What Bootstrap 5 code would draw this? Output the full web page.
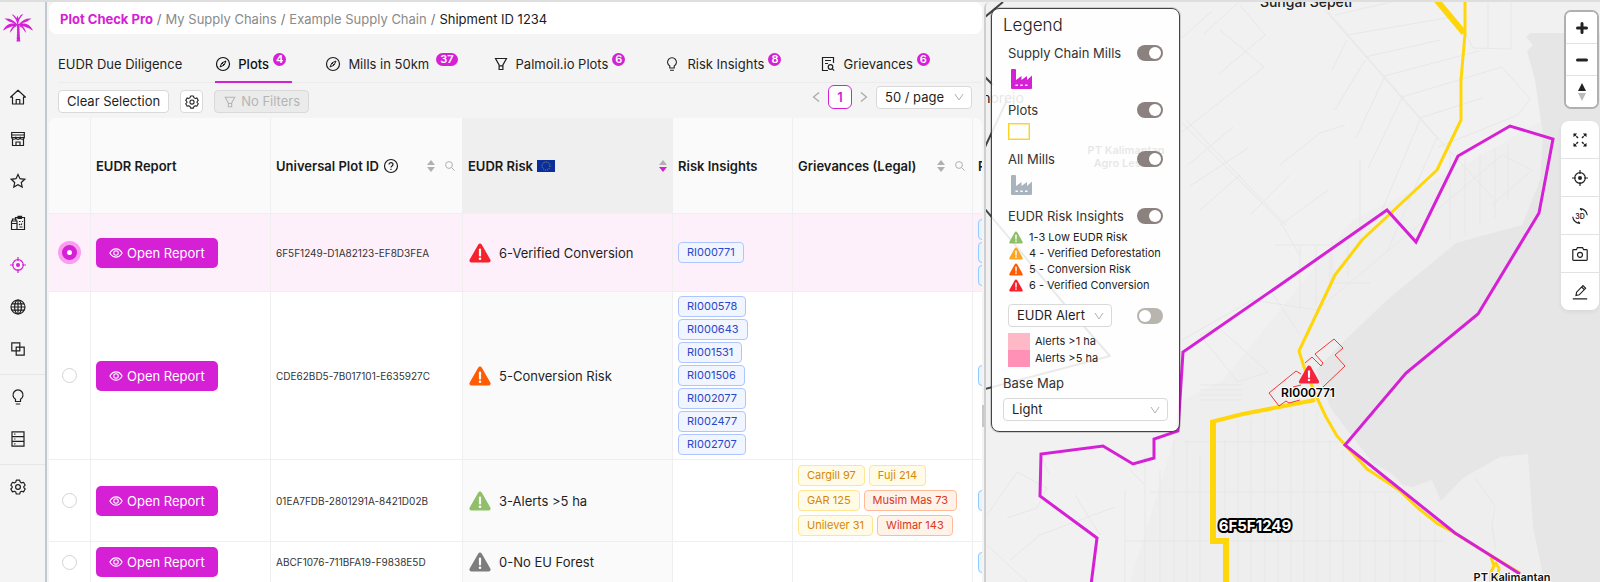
<!DOCTYPE html>
<html lang="en">
<head>
<meta charset="utf-8">
<meta name="viewport" content="width=device-width, initial-scale=1">
<title>Plot Check Pro</title>
<link href="https://cdn.jsdelivr.net/npm/bootstrap@5.3.0/dist/css/bootstrap.min.css" rel="stylesheet">
<style>
:root{--brand:#d520d5;--line:#efefef;--ink:#1f1f1f}
body{font-family:Inter,"Liberation Sans",sans-serif;font-size:13px;line-height:20px;color:var(--ink);background:#f4f4f4}
a{text-decoration:none;color:inherit}
.ico{width:16px;height:16px;flex:none;fill:none;stroke:currentColor;stroke-width:1.2;display:block}
.app{border-top:2px solid #dedede}
.rail{width:47px;flex:none;border-right:2px solid #c3c8d0;margin-right:1px}
.rail a{height:42px;padding-right:9px}
.rail a.on{color:var(--brand)}
.rail .brand{height:74px;padding-top:10px;color:var(--brand)}
.rail hr{margin:4px 0 1px;border-color:#bbb}
.work{flex:0 0 58.5%;min-width:0;padding-left:1px;padding-right:2px;position:relative}
.crumbs{background:#fff;border-radius:8px;height:32px;padding:1px 0 0 11px;margin:0;--bs-breadcrumb-divider-color:#777;--bs-breadcrumb-item-padding-x:4px}
.crumbs li{color:#8a8a8a}
.crumbs .first{color:var(--brand);font-weight:700}
.crumbs .active{color:#1b1b1b}
.tabbar{margin:12px 0 0 9px;height:37px;gap:33px;border-bottom:1px solid #ececec}
.tabbar .nav-link{padding:0;height:37px;color:var(--ink);gap:7px;border-bottom:2px solid transparent;display:flex;align-items:center}
.tabbar .nav-link.active{border-color:var(--brand);font-weight:500;color:#111}
.tabbar .badge{background:var(--brand);font-size:11px;line-height:13px;padding:0 3px;height:13px;font-weight:600;margin:0 6px 8px -3px}
.tabbar .badge.wide{margin:0 2px 8px 0;padding:0 4px}
.tools{padding:2px 10px 0 9px;height:35px}
.tools .acts{gap:11px;padding-top:5px}
.ctl{height:23px;border:1px solid #d9d9d9;border-radius:4px;background:#fff;color:var(--ink);padding:0 8px;font-size:13px;line-height:21px}
.ctl.sq{width:23px;padding:0}
.ctl.ghost{background:#ebebeb;color:#b5b5b5}
.ctl .ico{width:14px;height:14px}
.pager{gap:8px;color:#a8a8a8}
.pager .here{width:24px;height:24px;border:1px solid var(--brand);border-radius:6px;color:var(--brand);background:#fff;font-weight:600;line-height:22px;text-align:center}
.pager .ico{width:8px;height:12px}
.pick{height:23px;border:1px solid #d9d9d9;border-radius:4px;padding:0 26px 0 8px;font-size:13px;line-height:21px;color:var(--ink);appearance:none;background:#fff url("data:image/svg+xml,%3Csvg xmlns='http://www.w3.org/2000/svg' width='10' height='10' fill='none' stroke='%23b0b0b0'%3E%3Cpath d='M1 2l4 6 4-6'/%3E%3C/svg%3E") no-repeat right 7px center}
.pick.base{margin-top:5px}
.sheet{border-radius:8px 8px 0 0;overflow:hidden;background:#fff;flex:1}
.sheet table{width:1043px;table-layout:fixed;border-collapse:separate;border-spacing:0}
.sheet th,.sheet td{border-right:1px solid var(--line);border-bottom:1px solid var(--line);padding:0 5px;vertical-align:middle}
.sheet th{background:#fafafa;height:96px;font-weight:600;color:#1a1a1a}
.sheet .ranked{background:#fafafa;padding-left:6px}
.sheet th.ranked{background:#efefef;padding-left:5px}
.sheet tr.sel td{background:#fdf0fb}
.h1r{height:78px}.h2r{height:168px}.h3r{height:82px}.h4r{height:41px}
.sort,.find{color:#b0b0b0}
.sort{width:8px;height:12px;flex:none}
.find{width:10px;height:10px;margin:0 2px 0 10px}
.uid{font-size:10px;color:#333}
.open{background:var(--brand);color:#fff;border:0;border-radius:5px;height:30px;padding:0 13px;gap:4px}
.open .ico{width:14px;height:14px}
.dot{appearance:none;width:15px;height:15px;border:1px solid #d4d4d4;border-radius:50%;background:#fff;margin:0;display:block}
.dot:checked{border:5px solid var(--brand);box-shadow:0 0 0 4px #fb9df0}
.tag{font-size:11px;line-height:19px;height:21px;border:1px solid #adc6ff;background:#f0f5ff;color:#2b47c9;border-radius:4px;padding:0 8px;white-space:nowrap}
.stack{gap:2px}
.tag.y{background:#fffbe6;border-color:#ffe58f;color:#d48806}
.tag.r{background:#fff2e8;border-color:#ffbb96;color:#d9381a}
.tag.b{background:#e6f4ff;border-color:#91caff;width:60px}
.grip{position:absolute;right:0;top:403px;width:2px;height:22px;background:#c8c8c8}
.map{background:#f1f1f1;border-left:2px solid #cfcfcf;border-radius:6px 0 0 0}
.legendbox{position:absolute;left:5px;top:6px;width:189px;height:424px;background:rgba(255,255,255,.89);border:1px solid #444;border-radius:8px;padding:6px 11px;box-shadow:0 0 0 1px rgba(0,0,0,.15)}
.legendbox h2{font-size:17px;line-height:20px;font-weight:300;margin:0 0 9px;color:#222}
.legendbox .body{padding:0 5px}
.legendbox label{line-height:18px;color:#333}
.sw{appearance:none;width:26px;height:16px;border-radius:8px;background:#b8b4ae;margin:0;position:relative;flex:none}
.sw::after{content:"";position:absolute;width:12px;height:12px;border-radius:50%;background:#fff;top:2px;left:2px}
.sw:checked{background:#8b817e}
.sw:checked::after{left:12px}
.mill{width:22px;height:22px;display:block;margin:6px 0 11px 2px}
.plotbox{width:22px;height:17px;border:1px solid #ffd21f;margin:4px 0 10px;box-shadow:inset 0 0 0 1px #ffec9b}
.keys{list-style:none;margin:4px 0 11px;padding:0 0 0 1px;font-size:11px;line-height:16px}
.keys li{gap:6px;height:16px}
.keys svg{width:14px;height:13px}
.swatch{width:22px;height:17px}
.ramp{font-size:11px;line-height:17px;margin:6px 0 6px}
.ramp>div{gap:5px}
.zoomer{position:absolute;right:1px;top:8px;border:2px solid #b0b0b0;border-radius:7px;overflow:hidden;width:35px;background:#fff}
.zoomer button,.kit button{border:0;background:#fff;display:flex;align-items:center;justify-content:center;width:100%;color:#222}
.zoomer button{height:31px}
.zoomer button+button,.kit button+button{border-top:1px solid #e2e2e2}
.zoomer button+button{height:32px}
.kit{position:absolute;right:1px;top:119px;width:38px;border-radius:8px;overflow:hidden}
.kit button{height:37px}
.kit button+button{height:38px}
</style>
</head>
<body>
<svg width="0" height="0" class="position-absolute">
<defs>
<symbol id="warn" viewBox="0 0 22 20"><path d="M9.300 1.400a2 2 0 0 1 3.400 0l8.600 15.200a1.900 1.900 0 0 1-1.700 2.900H2.400a1.900 1.900 0 0 1-1.700-2.900z" fill="currentColor"/><path d="M11 6.500v6" stroke="#fff" stroke-width="2.200" stroke-linecap="round"/><circle cx="11" cy="15.700" r="1.300" fill="#fff"/></symbol>
<symbol id="eye" viewBox="0 0 16 16"><path d="M1 8c3.500-6.300 10.500-6.300 14 0-3.500 6.300-10.500 6.300-14 0z"/><circle cx="8" cy="8" r="2.600"/></symbol>
<symbol id="compass" viewBox="0 0 16 16"><circle cx="8" cy="8" r="6.500"/><path d="M11 5L6.900 6.900 5 11 9.100 9.100zM7 7l2 2" stroke-width="1"/></symbol>
<symbol id="funnel" viewBox="0 0 16 16"><path d="M2.500 2.500h11L9.900 9v4.500H6.100V9zM6.100 9.800h3.800"/></symbol>
<symbol id="bulb" viewBox="0 0 16 16"><path d="M5.500 12.500v-2.200a5 5 0 1 1 5 0v2.200zM5.800 15h4.400"/></symbol>
<symbol id="gear" viewBox="0 0 16 16"><path d="M6.300 1.200h3.400l.5 1.900 1.400.8 1.900-.6 1.700 2.900-1.400 1.400v1l1.400 1.400-1.700 2.900-1.900-.6-1.400.8-.5 1.900H6.300l-.5-1.900-1.400-.8-1.900.6L.8 10l1.400-1.400v-1L.8 6.200l1.700-2.900 1.900.6 1.400-.8z" stroke-linejoin="round"/><circle cx="8" cy="8" r="2.400"/></symbol>
<symbol id="aim" viewBox="0 0 16 16"><circle cx="8" cy="8" r="5.300"/><circle cx="8" cy="8" r="2" fill="currentColor" stroke="none"/><path d="M8 0v4M8 12v4M0 8h4M12 8h4"/></symbol>
<symbol id="sort" viewBox="0 0 8 12"><path d="M4 0l4 5H0z" fill="currentColor"/><path d="M4 12L0 7h8z" fill="var(--dn,currentColor)"/></symbol>
<symbol id="find" viewBox="0 0 10 10"><circle cx="4" cy="4" r="3.400" fill="none" stroke="currentColor"/><path d="M6.500 6.500L9.700 9.700" stroke="currentColor"/></symbol>
<symbol id="mill" viewBox="0 0 22 22"><path d="M2 1h3q1 0 1 1v10l5.500-4v4l5.500-4 0 4 5-4.500V20q0 1-1 1H2q-1 0-1-1V2q0-1 1-1z" fill="currentColor"/><path d="M5.500 17.300h2.400M10.300 17.300h2.400M15.100 17.300h2.400" stroke="#fff" stroke-width="1.400"/></symbol>
</defs>
</svg>
<div class="app d-flex vh-100 overflow-hidden">
<nav class="rail d-flex flex-column" aria-label="Main">
<a href="#" class="brand d-flex justify-content-center align-items-start" aria-label="Home page"><svg width="32" height="32" viewBox="0 0 32 32" fill="currentColor"><path d="M15.200 12c-.4-3-2-6.500-5.700-9.500 1 .1 1.500.5 2 .3 0 .7 1 1 1.500 1.300.2.900 1 1.300 1.300 2.200.3-1 .8-1 1-2.500.8.800 1 1.700 1 2.700.7-.6.800-1.500 1.500-1.800-.1-1 1.200-1.300 1.300-1.900.8.100 1.500-.4 2.500-.8-3.600 3.300-5 6.600-5.300 10zM15 12C11.500 8 8 6 2.300 6.500c1 .2 1 1 2 1.100.1.800 1.300.7 1.700 1.300 1 0 1.300.9 2.200.9.700.8 2 .5 2.700 1.300zM17 12c3.500-4 7-6 12.700-5.500-1 .2-1 1-2 1.100-.1.800-1.300.7-1.700 1.300-1 0-1.300.9-2.200.9-.7.800-2 .5-2.700 1.300zM15 12C9.500 10.800 4 12 1 18.500c1-.8 1.500-.3 2.200-1.300.7.300 1.200-.6 1.800-.9.700.2 1.200-.7 2-.6.800-.9 2-.4 2.800-1.100C12 14.300 13.500 13.500 15 13zM17 12c5.500-1.200 11 0 14 6.500-1-.8-1.500-.3-2.200-1.300-.7.300-1.200-.6-1.800-.9-.7.200-1.200-.7-2-.6-.8-.9-2-.4-2.800-1.100-2.200-.3-3.700-1.100-5.200-1.600zM15.500 12.500c-4 .8-7 4-7.600 8.300.7-.4 1-1.500 1.800-1.800 0-1.200 1.300-1.300 1.500-2.400 1.200-.6 1-1.300 2.200-1.500zM16.500 12.500c4 .8 7 4 7.600 8.300-.7-.4-1-1.500-1.800-1.800 0-1.200-1.300-1.300-1.500-2.400-1.200-.6-1-1.300-2.200-1.500z"/><path d="M14.700 12h2.500l.4 3.500-.3 1 .4 1.200-.3 1.300.4 1.200-.3 1.300.4 1.500-.2 1.500.4 1.500-.2 1.500.5 2h-4l.5-2-.3-1.500.5-1.500-.3-1.500.4-1.500-.3-1.300.3-1.200-.3-1.300.3-1.200-.3-1z"/></svg></a>
<a href="#" aria-label="Home" class="d-flex align-items-center justify-content-center"><svg class="ico" viewBox="0 0 16 16"><path d="M.5 8.200L8 1.200l7.500 7H13.500V15h-11V8.200zM6.200 15v-4.500h3.600V15" stroke-linejoin="round"/></svg></a>
<a href="#" aria-label="Mills" class="d-flex align-items-center justify-content-center"><svg class="ico" viewBox="0 0 16 16"><path d="M1.700 1.500h12.600v5H1.700zM1.700 4h12.600M2.500 8v6.500h11V8M6 14.500V11h4v3.500M1.700 6.500c.5 2.300 3.600 2.300 4.200.3.600 2 3.600 2 4.200 0 .6 2 3.700 2 4.200-.3"/></svg></a>
<a href="#" aria-label="Favourites" class="d-flex align-items-center justify-content-center"><svg class="ico" viewBox="0 0 16 16"><path d="M8 1.500l2 4.200 4.700.6-3.400 3.200.9 4.600L8 11.800l-4.200 2.300.9-4.600L1.300 6.300 6 5.700z"/></svg></a>
<a href="#" aria-label="Reports" class="d-flex align-items-center justify-content-center"><svg class="ico" viewBox="0 0 16 16"><path d="M1.500 6h5.500v8.500H1.500zM2.500 6V4h3.500v2M1.500 8.500H7M7 14.500h7.500V2.500H5.500V5M8 1.300h3.500v2H8zM9 6.500h1.500M12 6.500h1M9 9l1 1M12 8.500l-1 1.500M9.500 12h3"/></svg></a>
<a href="#" aria-label="Plots" class="on d-flex align-items-center justify-content-center"><svg class="ico"><use href="#aim"/></svg></a>
<a href="#" aria-label="Global" class="d-flex align-items-center justify-content-center"><svg class="ico" viewBox="0 0 16 16"><circle cx="8" cy="8" r="7"/><ellipse cx="8" cy="8" rx="3.400" ry="7"/><path d="M1 8h14M8 1v14M2 4.800h12M2 11.200h12"/></svg></a>
<a href="#" aria-label="Overlap" class="d-flex align-items-center justify-content-center"><svg class="ico" viewBox="0 0 16 16"><path d="M1.800 1.800h8v8h-8zM6.200 6.200h8v8h-8z"/></svg></a>
<hr>
<a href="#" aria-label="Insights" class="d-flex align-items-center justify-content-center"><svg class="ico"><use href="#bulb"/></svg></a>
<a href="#" aria-label="Database" class="d-flex align-items-center justify-content-center"><svg class="ico" viewBox="0 0 16 16"><path d="M2 .8h12v14.400H2zM2 5.600h12M2 10.400h12M4.200 3.200h1.200M4.200 8h1.200M4.200 12.800h1.200"/></svg></a>
<hr>
<a href="#" aria-label="Settings" class="d-flex align-items-center justify-content-center"><svg class="ico"><use href="#gear"/></svg></a>
</nav>
<main class="work d-flex flex-column">
<ol class="crumbs breadcrumb align-items-center flex-nowrap">
<li class="breadcrumb-item"><a href="#" class="first">Plot Check Pro</a></li>
<li class="breadcrumb-item"><a href="#">My Supply Chains</a></li>
<li class="breadcrumb-item"><a href="#">Example Supply Chain</a></li>
<li class="breadcrumb-item active">Shipment ID 1234</li>
</ol>
<ul class="tabbar nav flex-nowrap text-nowrap">
<li><a class="nav-link" href="#">EUDR Due Diligence</a></li>
<li><a class="nav-link active" href="#"><svg class="ico"><use href="#compass"/></svg>Plots<span class="badge rounded-pill">4</span></a></li>
<li><a class="nav-link" href="#"><svg class="ico"><use href="#compass"/></svg>Mills in 50km<span class="badge rounded-pill wide">37</span></a></li>
<li><a class="nav-link" href="#"><svg class="ico"><use href="#funnel"/></svg>Palmoil.io Plots<span class="badge rounded-pill">6</span></a></li>
<li><a class="nav-link" href="#"><svg class="ico" viewBox="-1 -1 18 18"><use href="#bulb" width="16" height="16"/></svg>Risk Insights<span class="badge rounded-pill">8</span></a></li>
<li><a class="nav-link" href="#"><svg class="ico" viewBox="0 0 16 16"><path d="M13.500 7V1.500h-11v13H8M5 4.500h6M5 7.500h3"/><circle cx="10.500" cy="11" r="2.300"/><path d="M12.200 12.700l2 2"/></svg>Grievances<span class="badge rounded-pill">6</span></a></li>
</ul>
<div class="tools d-flex align-items-start justify-content-between">
<div class="acts d-flex">
<button class="ctl">Clear Selection</button>
<button class="ctl sq d-flex align-items-center justify-content-center" aria-label="Table settings"><svg class="ico"><use href="#gear"/></svg></button>
<button class="ctl ghost d-flex align-items-center gap-1" disabled><svg class="ico"><use href="#funnel"/></svg>No Filters</button>
</div>
<div class="pager d-flex align-items-center">
<a href="#" aria-label="Previous"><svg class="ico" viewBox="0 0 8 12"><path d="M7 1.500L1.500 6 7 10.500"/></svg></a>
<a href="#" class="here">1</a>
<a href="#" aria-label="Next"><svg class="ico" viewBox="0 0 8 12"><path d="M1 1.500L6.500 6 1 10.500"/></svg></a>
<select class="pick" aria-label="Page size"><option>50 / page</option></select>
</div>
</div>
<div class="sheet">
<table>
<colgroup><col style="width:42px"><col style="width:180px"><col style="width:192px"><col style="width:210px"><col style="width:120px"><col style="width:180px"><col style="width:119px"></colgroup>
<thead><tr>
<th></th><th>EUDR Report</th>
<th><div class="d-flex align-items-center">Universal Plot ID<svg class="ico ms-1" viewBox="0 0 16 16"><circle cx="8" cy="8" r="6.500"/><path d="M6 6.600c0-2.700 4-2.500 4 0 0 1.400-2 1.500-2 3M8 10.700v1.300"/></svg><svg class="sort ms-auto"><use href="#sort"/></svg><svg class="find"><use href="#find"/></svg></div></th>
<th class="ranked"><div class="d-flex align-items-center">EUDR Risk<svg class="ms-1" width="18" height="12" viewBox="0 0 18 12"><path fill="#0a2f9c" d="M0 0h18v12H0z"/><circle cx="9" cy="6" r="4" fill="none" stroke="#a39a52" stroke-dasharray="1 1.090"/></svg><svg class="sort ms-auto" style="--dn:var(--brand)"><use href="#sort"/></svg></div></th>
<th>Risk Insights</th>
<th><div class="d-flex align-items-center">Grievances (Legal)<svg class="sort ms-auto"><use href="#sort"/></svg><svg class="find"><use href="#find"/></svg></div></th>
<th>P</th>
</tr></thead>
<tbody>
<tr class="sel h1r"><td><input class="dot mx-auto" type="radio" name="plot" aria-label="Select 6F5F1249" checked></td><td><button class="open d-flex align-items-center"><svg class="ico"><use href="#eye"/></svg>Open Report</button></td><td class="uid">6F5F1249-D1A82123-EF8D3FEA</td><td class="ranked"><div class="d-flex align-items-center gap-2"><svg width="22" height="20" style="color:#f5222d"><use href="#warn"/></svg>6-Verified Conversion</div></td><td><div class="d-flex"><a href="#" class="tag">RI000771</a></div></td><td></td><td><div class="stack d-flex flex-column"><span class="tag b"></span><span class="tag b"></span><span class="tag b"></span></div></td></tr>
<tr class="h2r"><td><input class="dot mx-auto" type="radio" name="plot" aria-label="Select CDE62BD5"></td><td><button class="open d-flex align-items-center"><svg class="ico"><use href="#eye"/></svg>Open Report</button></td><td class="uid">CDE62BD5-7B017101-E635927C</td><td class="ranked"><div class="d-flex align-items-center gap-2"><svg width="22" height="20" style="color:#ff5b05"><use href="#warn"/></svg>5-Conversion Risk</div></td><td><div class="stack d-flex flex-column align-items-start"><a href="#" class="tag">RI000578</a><a href="#" class="tag">RI000643</a><a href="#" class="tag">RI001531</a><a href="#" class="tag">RI001506</a><a href="#" class="tag">RI002077</a><a href="#" class="tag">RI002477</a><a href="#" class="tag">RI002707</a></div></td><td></td><td><span class="tag b d-block"></span></td></tr>
<tr class="h3r"><td><input class="dot mx-auto" type="radio" name="plot" aria-label="Select 01EA7FDB"></td><td><button class="open d-flex align-items-center"><svg class="ico"><use href="#eye"/></svg>Open Report</button></td><td class="uid">01EA7FDB-2801291A-8421D02B</td><td class="ranked"><div class="d-flex align-items-center gap-2"><svg width="22" height="20" style="color:#8fbf68"><use href="#warn"/></svg>3-Alerts &gt;5 ha</div></td><td></td><td><div class="d-flex flex-wrap gap-1"><a href="#" class="tag y">Cargill 97</a><a href="#" class="tag y me-4">Fuji 214</a><a href="#" class="tag y">GAR 125</a><a href="#" class="tag r">Musim Mas 73</a><a href="#" class="tag y">Unilever 31</a><a href="#" class="tag r">Wilmar 143</a></div></td><td><span class="tag b d-block"></span></td></tr>
<tr class="h4r"><td><input class="dot mx-auto" type="radio" name="plot" aria-label="Select ABCF1076"></td><td><button class="open d-flex align-items-center"><svg class="ico"><use href="#eye"/></svg>Open Report</button></td><td class="uid">ABCF1076-711BFA19-F9838E5D</td><td class="ranked"><div class="d-flex align-items-center gap-2"><svg width="22" height="20" style="color:#7d7d7d"><use href="#warn"/></svg>0-No EU Forest</div></td><td></td><td></td><td><span class="tag b d-block"></span></td></tr>
</tbody>
</table>
</div>
<div class="grip"></div>
</main>
<section class="map flex-grow-1 position-relative overflow-hidden" aria-label="Map">
<svg class="position-absolute w-100 h-100" viewBox="986 2 614 580" preserveAspectRatio="xMinYMin slice" fill="none">
<path fill="#f1f1f1" d="M986 2h614v580H986z"/>
<path fill="#eee" d="M1183 400l40-20 130-160 120-60 70-40V34h57v548H1130l40-130z"/>
<path fill="#e6e6e6" d="M1600 33h-70l-4 4 7 8-6 6 8 29 8 55-3 45-18 45-66 18-69 57-47 45-24 25 14 37 17 23 26 33 19 11 11 11 9 2 20-7 9 21 22-23 37-21 28-3 5 73 10 48 2 7h55z"/>
<g stroke="#e7e7e7">
<path d="M1328 12l110 126 55 60M1325 10l110 126M1335 15l60-14M1347 35l105-18M1365 57l75-17M1384 76l95-25M1402 97l100-30 28 32-12 16-80 32M1420 118l62-20M1347 40l-15 30M1365 60l-30 50M1384 78l-28 60M1402 98l-34 70M1420 120l-40 95M1437 137l-50 115M1182 38l30-27M1204 34l36-33M1240 5l25 30-45 38M1220 30l44 37-82 65M1280 165l40-32 25-8M1280 225l48-35M1182 123l98 98 20 35M1186 120l100 105M1188 165l45-38M1190 186l58-38M1200 210l40-35M1250 215l40-40M1465 2v30l8 16 38 1V2M1488 2v46M1182 340l70-40 65 10 90-75 95-80 30 15-40 35M1275 245h55v38h40M1360 160v80M1450 150v90M1465 158v78M1480 154v72M1495 148v70M1508 145v55M1200 335l18-8 50 45-30 10zM1270 290l30 45M1300 245v65M1316 245v60M1332 242v48M1348 240v38"/>
<path d="M1183 442h165M1150 492h250M1125 541h320M1225 440v142M1238 420v162M1251 418v164M1265 414v168M1278 412v170M1291 410v172M1304 408v174M1317 410v172M1330 440v142M1343 450v132M1360 480v102M1375 490v92M1390 495v87M1405 505v77M1420 515v67M1435 525v57M1200 455v127M1187 440v142M1174 440v142M1160 470v112M1145 455v127M1125 490v92M1200 385h42M1200 390h42M1200 395h42M1200 400h42"/>
<path d="M1475 478l20 28-3 20 4 25M987 515l30-43 30 16-10 20-30 10M1010 560l30-25 75-28M987 545l40 37M1040 455l10 20M1075 495l25 40M1130 470l15 15"/>
</g>
<g stroke="#444" stroke-width="2"><path d="M985 17l18-15M985 77l8 8M985 147l22-47M985 209l81 97 44 50-125 33" stroke-linejoin="round"/></g>
<g fill="#222" font-family="Inter,sans-serif" font-weight="600" text-anchor="middle" font-size="11"><text x="1306" y="7" font-size="14" font-weight="500">Sungai Sepeti</text><text x="1003" y="103" font-size="14" font-weight="400">norejo</text><text x="1126" y="154">PT Kalimantan</text><text x="1126" y="167">Agro Lestari</text></g>
<g stroke="#ffd60a" stroke-width="3" stroke-linejoin="round"><path d="M1465 0v34l-4 46v40l-24 50-75 70-27 35-36 76 5 16 13 31 9 19 11 19 30 33 32 21 19 18 20 16 15 8 37 23 30 18M1491 557l3 9-3 6v10M1495 562l4 6-2 14"/><path d="M1434 -3l30 36" stroke-width="6"/><path d="M1315 400l-72 14-32 8" stroke-width="4"/><path d="M1213 420v121h13v44" stroke-width="6" stroke-linejoin="miter"/></g>
<path stroke="#d520d5" stroke-width="3" d="M1091 585l6-47-57-42 1-42 62-8 30 18 21-6v-19l24-8 5-79 97-67 107-75 29 32 42-86 52-30 43 13-14 74-61 101-72 59-61 72 110 88 65 41"/>
<path stroke="#f33" d="M1301 374l-5-3-27 22 10 13 7-5 3 2 11-3M1293 387l8-2M1305 363l7-6 9 9 2-3-8-9 19-15 9 9-8 7 10 11-22 21"/>
<svg x="1298" y="365" width="22" height="19" color="#f5233d"><use href="#warn"/></svg>
<g font-family="Inter,sans-serif" text-anchor="middle" paint-order="stroke" stroke-linejoin="round"><text x="1308" y="397" font-size="12" font-weight="600" fill="#000" stroke="#fff" stroke-width="2">RI000771</text><text x="1255" y="531" font-size="15" font-weight="700" fill="#fff" stroke="#000" stroke-width="4">6F5F1249</text><text x="1512" y="581" font-size="11" font-weight="600" fill="#111" stroke="#fff" stroke-width="2">PT Kalimantan</text></g>
</svg>
<div class="legendbox">
<h2>Legend</h2>
<div class="body">
<div class="d-flex justify-content-between align-items-center"><label for="s1">Supply Chain Mills</label><input class="sw" id="s1" type="checkbox" role="switch" checked></div>
<svg class="mill" style="color:#d520d5"><use href="#mill"/></svg>
<div class="d-flex justify-content-between align-items-center"><label for="s2">Plots</label><input class="sw" id="s2" type="checkbox" role="switch" checked></div>
<div class="plotbox"></div>
<div class="d-flex justify-content-between align-items-center"><label for="s3">All Mills</label><input class="sw" id="s3" type="checkbox" role="switch" checked></div>
<svg class="mill" style="color:#a9b3be"><use href="#mill"/></svg>
<div class="d-flex justify-content-between align-items-center"><label for="s4">EUDR Risk Insights</label><input class="sw" id="s4" type="checkbox" role="switch" checked></div>
<ul class="keys text-nowrap">
<li class="d-flex align-items-center"><svg style="color:#8fbf68"><use href="#warn"/></svg>1-3 Low EUDR Risk</li>
<li class="d-flex align-items-center"><svg style="color:#fba524"><use href="#warn"/></svg>4 - Verified Deforestation</li>
<li class="d-flex align-items-center"><svg style="color:#ff5b05"><use href="#warn"/></svg>5 - Conversion Risk</li>
<li class="d-flex align-items-center"><svg style="color:#f5222d"><use href="#warn"/></svg>6 - Verified Conversion</li>
</ul>
<div class="d-flex justify-content-between align-items-center"><select class="pick" aria-label="Alert type"><option>EUDR Alert</option></select><input class="sw" type="checkbox" role="switch" aria-label="Show alerts"></div>
<div class="ramp">
<div class="d-flex"><span class="swatch" style="background:#ffb8c6"></span>Alerts &gt;1 ha</div>
<div class="d-flex"><span class="swatch" style="background:#ff91b7"></span>Alerts &gt;5 ha</div>
</div>
</div>
<label for="base">Base Map</label>
<select class="pick base w-100" id="base"><option>Light</option></select>
</div>
<div class="zoomer"><button aria-label="Zoom in"><svg width="14" height="14" stroke="currentColor" stroke-width="3" stroke-linecap="round"><path d="M7 2.500v9M2.500 7h9"/></svg></button><button aria-label="Zoom out"><svg width="14" height="14" stroke="currentColor" stroke-width="3" stroke-linecap="round"><path d="M2.500 7h9"/></svg></button><button aria-label="Reset bearing"><svg width="10" height="18"><path d="M5 0l4 8H1z" fill="#222"/><path d="M5 18l4-8H1z" fill="#bbb"/></svg></button></div>
<div class="kit shadow-sm">
<button aria-label="Fit to view"><svg class="ico" viewBox="0 0 16 16"><path d="M2 2l4 4M14 2l-4 4M2 14l4-4M14 14l-4-4" stroke-dasharray="2.500 .8" stroke-width="1.500"/><path d="M1.500 5.200V1.500h3.700zM10.800 1.500h3.700v3.700zM1.500 10.800v3.700h3.700zM14.500 10.800v3.700h-3.700z" fill="currentColor" stroke="none"/></svg></button>
<button aria-label="Locate"><svg class="ico"><use href="#aim"/></svg></button>
<button aria-label="3D view"><svg class="ico" viewBox="0 0 16 16"><path d="M8 .6a7.400 7.400 0 0 1 7.300 6.600M8 15.400A7.400 7.400 0 0 1 .7 8.800M8 .6l1.800 1.800M8 15.400l-1.800-1.800"/><text x="8" y="10.500" font-size="7" font-weight="600" text-anchor="middle" fill="currentColor" stroke="none">3D</text></svg></button>
<button aria-label="Snapshot"><svg class="ico" viewBox="0 0 16 16"><path d="M.8 4.500q0-.8.800-.8h2.800l1-2h5.200l1 2h2.800q.8 0 .8.800v9q0 .8-.8.800H1.600q-.8 0-.8-.8z"/><circle cx="8" cy="8.800" r="2.500"/></svg></button>
<button aria-label="Draw"><svg class="ico" viewBox="0 0 16 16"><path d="M4 11.500l.6-3.300L11 1.700l2.600 2.600L7.200 10.800zM.8 14.800h14.400M9.700 3l2.600 2.600"/></svg></button>
</div>
</section>
</div>
<script src="https://cdn.jsdelivr.net/npm/bootstrap@5.3.0/dist/js/bootstrap.bundle.min.js"></script>
</body>
</html>
